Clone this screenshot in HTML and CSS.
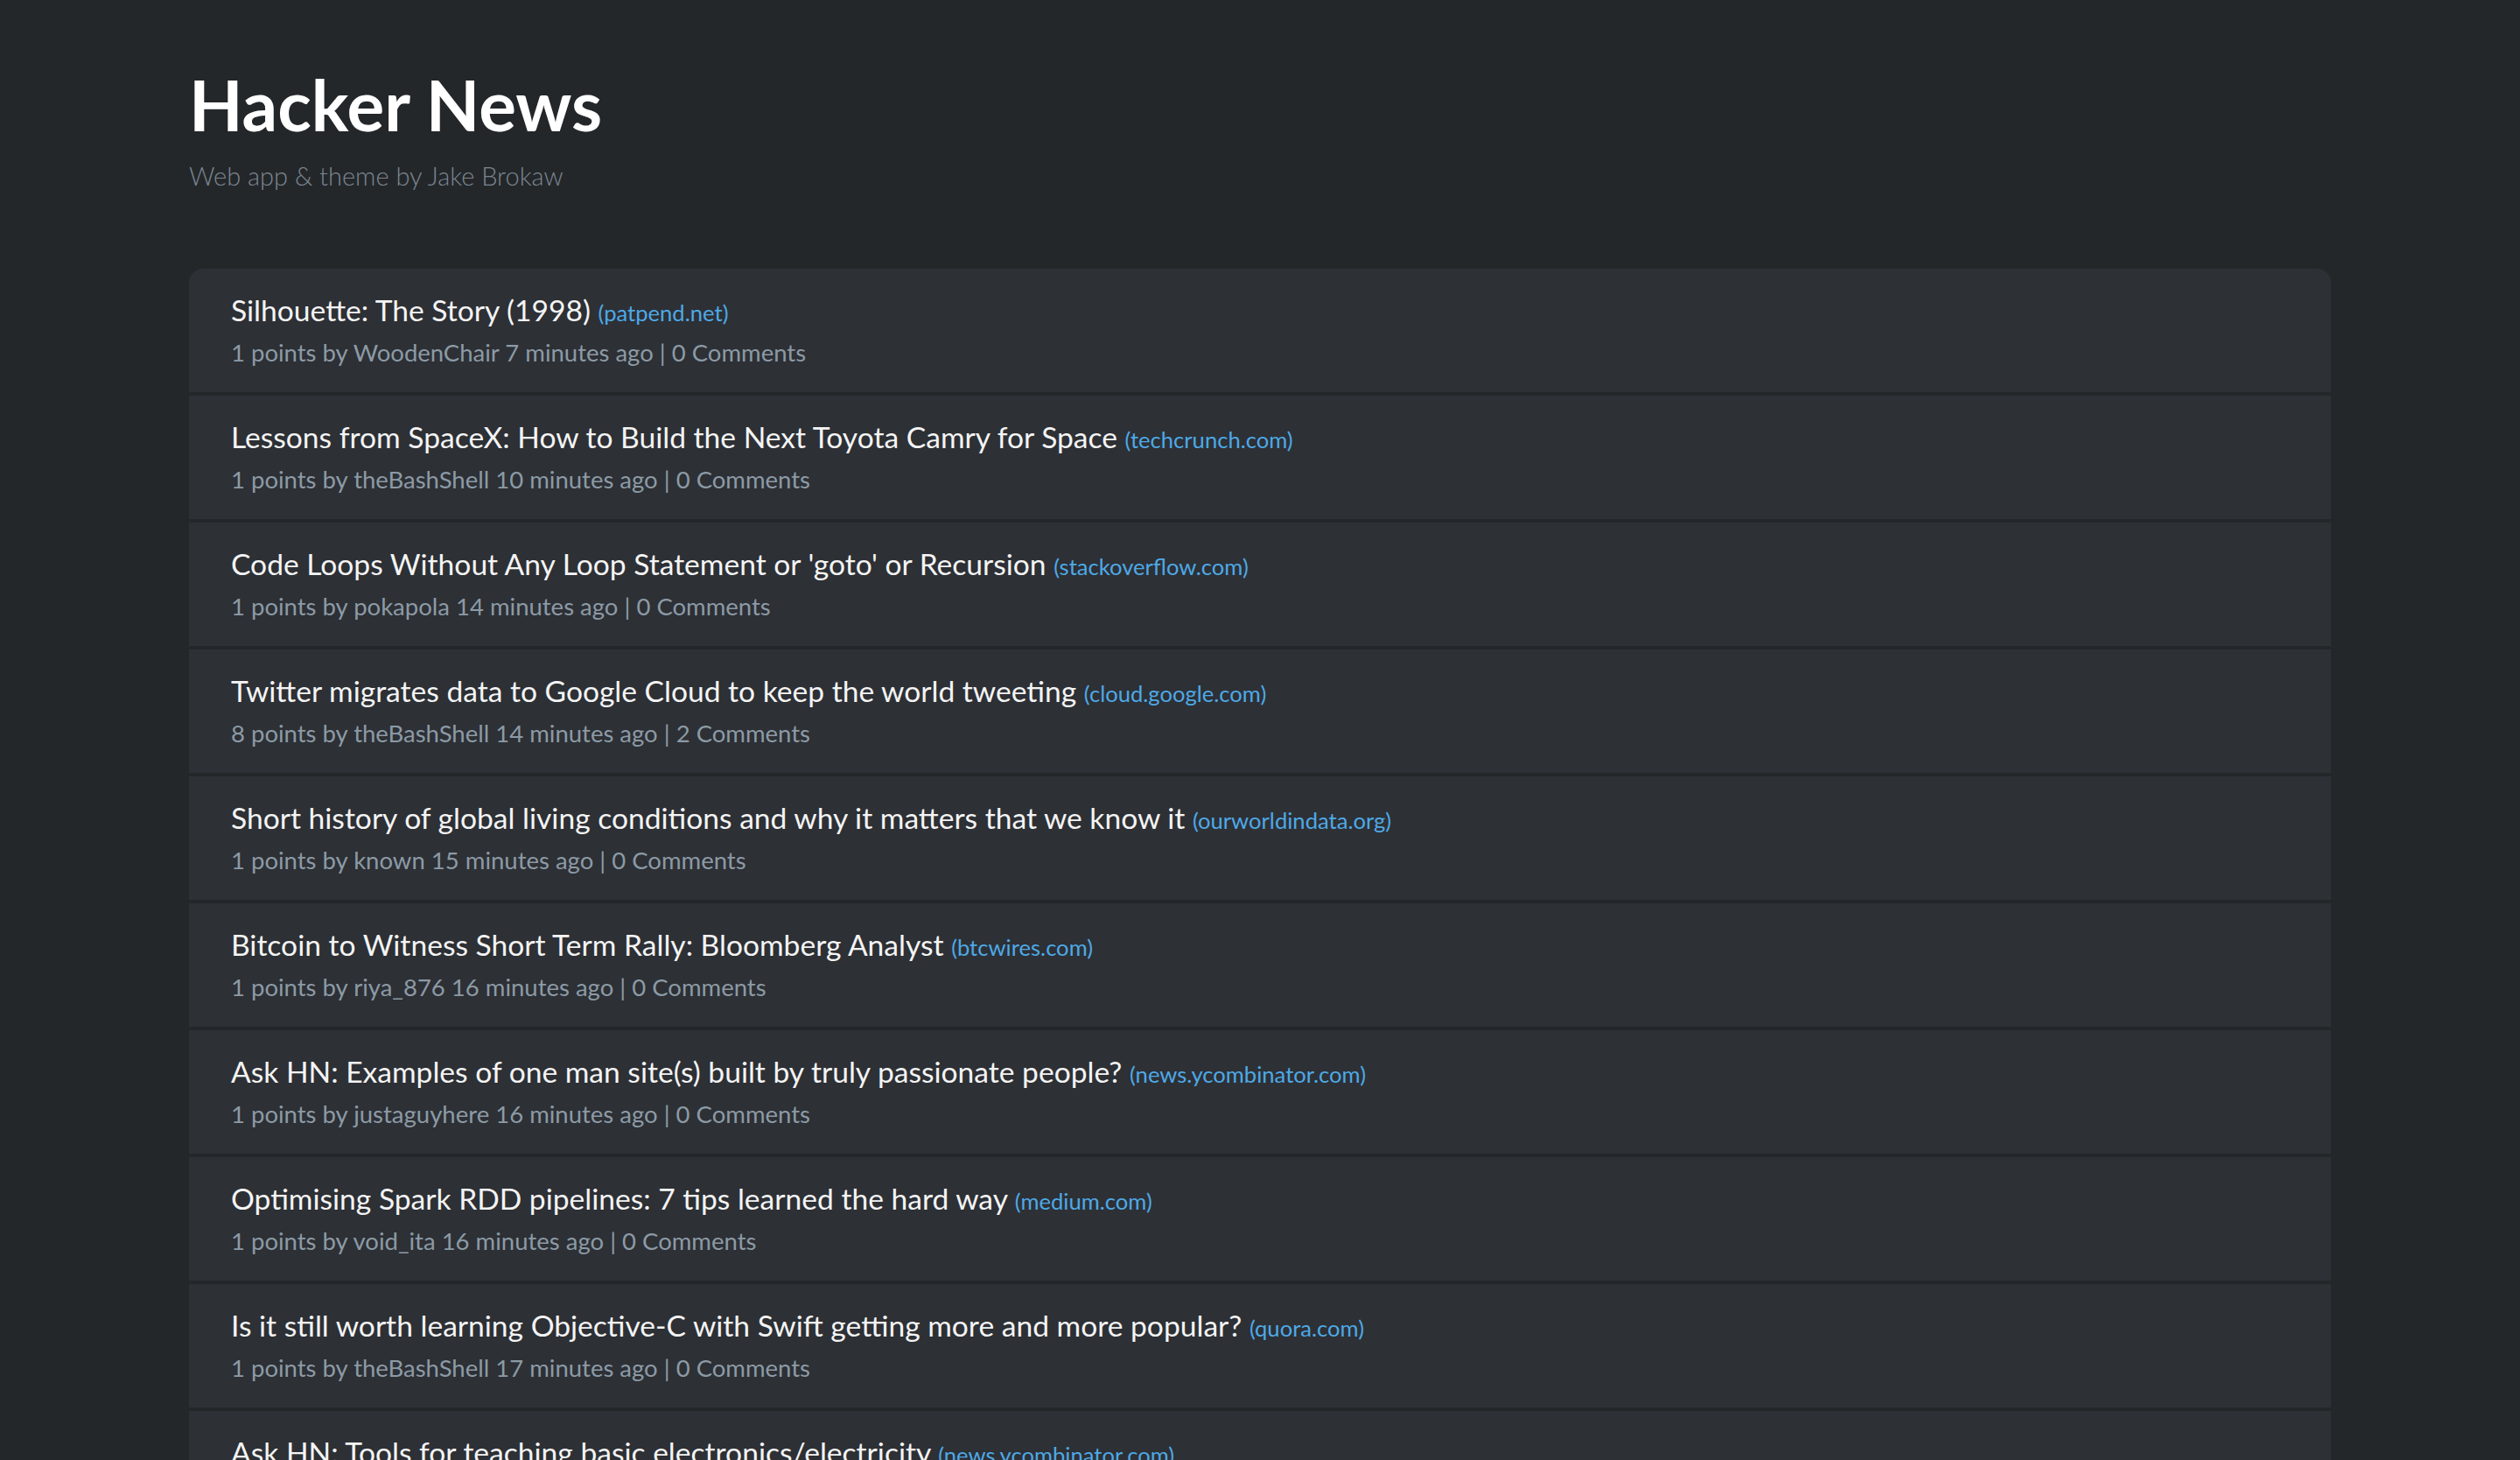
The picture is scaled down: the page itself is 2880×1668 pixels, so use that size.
FILE: index.html
```html
<!DOCTYPE html>
<html lang="en">
<head>
<meta charset="utf-8">
<title>Hacker News</title>
<link rel="stylesheet" href="styles.css">
</head>
<body>
<div class="page">
  <header class="header">
    <h1 class="brand">Hacker News</h1>
    <p class="byline">Web app &amp; theme by Jake Brokaw</p>
  </header>
  <ul class="stories">
    <li class="story">
      <div class="story-title"><a class="title-link" href="#">Silhouette: The Story (1998)</a> <span class="domain">(patpend.net)</span></div>
      <div class="story-meta">1 points by WoodenChair 7 minutes ago | 0 Comments</div>
    </li>
    <li class="story">
      <div class="story-title"><a class="title-link" href="#">Lessons from SpaceX: How to Build the Next Toyota Camry for Space</a> <span class="domain">(techcrunch.com)</span></div>
      <div class="story-meta">1 points by theBashShell 10 minutes ago | 0 Comments</div>
    </li>
    <li class="story">
      <div class="story-title"><a class="title-link" href="#">Code Loops Without Any Loop Statement or 'goto' or Recursion</a> <span class="domain">(stackoverflow.com)</span></div>
      <div class="story-meta">1 points by pokapola 14 minutes ago | 0 Comments</div>
    </li>
    <li class="story">
      <div class="story-title"><a class="title-link" href="#">Twitter migrates data to Google Cloud to keep the world tweeting</a> <span class="domain">(cloud.google.com)</span></div>
      <div class="story-meta">8 points by theBashShell 14 minutes ago | 2 Comments</div>
    </li>
    <li class="story">
      <div class="story-title"><a class="title-link" href="#">Short history of global living conditions and why it matters that we know it</a> <span class="domain">(ourworldindata.org)</span></div>
      <div class="story-meta">1 points by known 15 minutes ago | 0 Comments</div>
    </li>
    <li class="story">
      <div class="story-title"><a class="title-link" href="#">Bitcoin to Witness Short Term Rally: Bloomberg Analyst</a> <span class="domain">(btcwires.com)</span></div>
      <div class="story-meta">1 points by riya_876 16 minutes ago | 0 Comments</div>
    </li>
    <li class="story">
      <div class="story-title"><a class="title-link" href="#">Ask HN: Examples of one man site(s) built by truly passionate people?</a> <span class="domain">(news.ycombinator.com)</span></div>
      <div class="story-meta">1 points by justaguyhere 16 minutes ago | 0 Comments</div>
    </li>
    <li class="story">
      <div class="story-title"><a class="title-link" href="#">Optimising Spark RDD pipelines: 7 tips learned the hard way</a> <span class="domain">(medium.com)</span></div>
      <div class="story-meta">1 points by void_ita 16 minutes ago | 0 Comments</div>
    </li>
    <li class="story">
      <div class="story-title"><a class="title-link" href="#">Is it still worth learning Objective-C with Swift getting more and more popular?</a> <span class="domain">(quora.com)</span></div>
      <div class="story-meta">1 points by theBashShell 17 minutes ago | 0 Comments</div>
    </li>
    <li class="story">
      <div class="story-title"><a class="title-link" href="#">Ask HN: Tools for teaching basic electronics/electricity</a> <span class="domain">(news.ycombinator.com)</span></div>
      <div class="story-meta">1 points by hackerboy 18 minutes ago | 0 Comments</div>
    </li>
  </ul>
</div>
</body>
</html>
```

FILE: styles.css
```css
html, body {
  margin: 0;
  padding: 0;
  background: #24272a;
}

body {
  font-family: Lato, "Open Sans", "Liberation Sans", sans-serif;
  color: #f4f4f4;
}

.page {
  padding: 0 216px;
}

.header {
  padding-top: 71px;
  padding-bottom: 85px;
}

.brand {
  margin: 0;
  font-size: 80px;
  font-weight: 700;
  line-height: 96px;
  color: #ffffff;
}

.byline {
  margin: 0;
  padding-top: 13px;
  font-size: 29px;
  font-weight: 300;
  line-height: 42px;
  color: #7a8691;
}

.stories {
  list-style: none;
  margin: 0;
  padding: 0;
  display: flex;
  flex-direction: column;
  gap: 4px;
  border-radius: 16px;
  overflow: hidden;
}

.story {
  background: #2d3035;
  padding: 23px 48px 24px;
}

.story-title {
  font-size: 33.6px;
  line-height: 48px;
  color: #f4f4f4;
}

.title-link {
  color: #f4f4f4;
  text-decoration: none;
}

.domain {
  font-size: 25.6px;
  line-height: 1;
  color: #4ea9e6;
}

.story-meta {
  margin-top: 4px;
  font-size: 27.5px;
  line-height: 42px;
  color: #8c9aa5;
}
```
